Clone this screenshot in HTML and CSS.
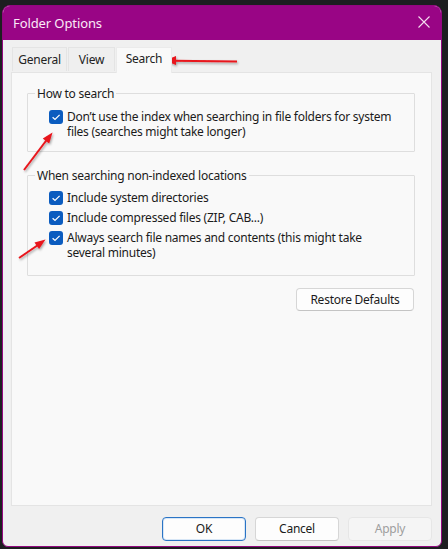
FILE: index.html
```html
<!DOCTYPE html>
<html>
<head>
<meta charset="utf-8">
<title>Folder Options</title>
<link rel="stylesheet" href="styles.css">
</head>
<body>
<div class="window">
  <div class="titlebar">
    <span class="title">Folder Options</span>
    <svg class="close" width="12" height="12" viewBox="0 0 12 12"><path d="M0.5 0.5 L11.5 11.5 M11.5 0.5 L0.5 11.5" stroke="#f4dcef" stroke-width="1.1" fill="none"/></svg>
  </div>
  <div class="body">
    <div class="tabs">
      <div class="tab">General</div>
      <div class="tab">View</div>
      <div class="tab active">Search</div>
    </div>
    <div class="panel">
      <fieldset class="group">
        <legend>How to search</legend>
        <div class="group-inner g1">
          <label class="check"><span class="box"><svg viewBox="0 0 14 14"><path d="M3.6 7.2 L6 9.5 L10.6 4.8" stroke="#fff" stroke-width="1.2" fill="none"/></svg></span><span class="ctext">Don’t use the index when searching in file folders for system files (searches might take longer)</span></label>
        </div>
      </fieldset>
      <fieldset class="group second">
        <legend>When searching non-indexed locations</legend>
        <div class="group-inner g2">
          <label class="check"><span class="box"><svg viewBox="0 0 14 14"><path d="M3.6 7.2 L6 9.5 L10.6 4.8" stroke="#fff" stroke-width="1.2" fill="none"/></svg></span><span class="ctext">Include system directories</span></label>
          <label class="check"><span class="box"><svg viewBox="0 0 14 14"><path d="M3.6 7.2 L6 9.5 L10.6 4.8" stroke="#fff" stroke-width="1.2" fill="none"/></svg></span><span class="ctext">Include compressed files (ZIP, CAB...)</span></label>
          <label class="check"><span class="box"><svg viewBox="0 0 14 14"><path d="M3.6 7.2 L6 9.5 L10.6 4.8" stroke="#fff" stroke-width="1.2" fill="none"/></svg></span><span class="ctext">Always search file names and contents (this might take several minutes)</span></label>
        </div>
      </fieldset>
      <div class="restore-row">
        <button class="btn restore">Restore Defaults</button>
      </div>
    </div>
    <div class="footer">
      <button class="btn default">OK</button>
      <button class="btn">Cancel</button>
      <button class="btn disabled">Apply</button>
    </div>
  </div>
</div>
<svg class="annotations" width="448" height="549" viewBox="0 0 448 549">
  <defs>
    <filter id="sh" x="-20%" y="-20%" width="140%" height="140%">
      <feDropShadow dx="1" dy="1.5" stdDeviation="1" flood-color="#000" flood-opacity="0.35"/>
    </filter>
  </defs>
  <g filter="url(#sh)" fill="#e8141b" stroke="#e8141b">
    <line x1="237" y1="61.5" x2="173" y2="60.8" stroke-width="2"/>
    <polygon points="165,60.5 176,56 176,65" stroke="none"/>
    <line x1="24" y1="170" x2="47" y2="139.5" stroke-width="2"/>
    <polygon points="52.5,132.5 49.2,143.4 42.8,138.6" stroke="none"/>
    <line x1="19" y1="258" x2="38" y2="245" stroke-width="2"/>
    <polygon points="45.5,239.5 39.1,249 34.5,242.4" stroke="none"/>
  </g>
</svg>
</body>
</html>
```
FILE: styles.css
```css
* { box-sizing: border-box; }
html, body { margin: 0; padding: 0; }
body {
  background: #1d1e20;
  width: 448px;
  height: 549px;
  overflow: hidden;
  position: relative;
  font-family: "Noto Sans", "Open Sans", sans-serif;
  font-size: 12px;
  letter-spacing: -0.25px;
  color: #1b1b1b;
}
.window {
  margin: 5px 0 0 2px;
  width: 440px;
  height: 542px;
  border: 1px solid #93077f;
  border-radius: 8px 8px 6px 6px;
  background: #f0f0f0;
  overflow: hidden;
  display: flex;
  flex-direction: column;
}
.titlebar {
  height: 34px;
  background: #990585;
  display: flex;
  align-items: center;
  justify-content: space-between;
  padding: 0 11px 0 10px;
  flex: none;
}
.title {
  color: #fbeaf8;
  font-size: 13px;
  letter-spacing: -0.1px;
}
.close { display: block; margin-top: -2px; }
.body {
  flex: 1;
  display: flex;
  flex-direction: column;
  padding: 7px 9px 0 8px;
}
.tabs {
  display: flex;
  align-items: flex-end;
  height: 25px;
  padding-left: 1px;
  position: relative;
  z-index: 1;
}
.tab {
  height: 24px;
  padding: 3px 0 0;
  text-align: center;
  border: 1px solid #e4e4e4;
  border-bottom: none;
  background: #efefef;
  color: #222;
  margin-right: 1px;
  margin-bottom: 1px;
}
.tab:nth-child(1) { width: 55px; }
.tab:nth-child(2) { width: 47px; }
.tab.active {
  width: 56px;
  height: 26px;
  background: #f9f9f9;
  margin-bottom: -1px;
  padding-top: 2px;
  border-color: #ebebeb;
}
.panel {
  width: 421px;
  height: 434px;
  background: #f9f9f9;
  border: 1px solid #e4e4e4;
  padding: 13px 16px 0 15px;
  display: flex;
  flex-direction: column;
}
.group {
  margin: 0;
  padding: 0;
  border: 1px solid #dedede;
  border-radius: 1px;
  min-width: 0;
}
.group.second { margin-top: 16px; }
.group legend {
  margin-left: 7px;
  padding: 0 2px;
  line-height: 15px;
}
.group-inner {
  padding-left: 21px;
  padding-right: 14px;
  display: flex;
  flex-direction: column;
}
.g1 { padding-top: 8px; padding-bottom: 12px; }
.g2 { padding-top: 7px; padding-bottom: 15px; gap: 5px; }
.check {
  display: flex;
  align-items: flex-start;
  line-height: 15px;
}
.box {
  flex: none;
  width: 14px;
  height: 14px;
  margin-top: 1px;
  margin-right: 4px;
  background: #0b5cbf;
  border-radius: 3px;
  display: block;
}
.box svg { display: block; width: 14px; height: 14px; }
.ctext { display: block; }
.restore-row {
  display: flex;
  justify-content: flex-end;
  margin-top: 12px;
  padding-right: 1px;
}
.btn {
  font-family: inherit;
  font-size: 12px;
  letter-spacing: -0.25px;
  color: #1b1b1b;
  background: #fdfdfd;
  border: 1px solid #d6d6d6;
  border-bottom-color: #c4c4c4;
  border-radius: 4px;
  height: 24px;
  width: 84px;
  padding: 0;
  line-height: 20px;
}
.restore { width: 118px; height: 23px; }
.footer {
  display: flex;
  justify-content: flex-end;
  gap: 9px;
  margin-top: 11px;
  padding-right: 0;
}
.btn.default {
  border: 1px solid #2a74c5;
  box-shadow: inset 0 0 0 1px #d7e6f6;
}
.btn.disabled {
  background: #f5f5f5;
  border-color: #e6e6e6;
  color: #9e9e9e;
}
.annotations {
  position: absolute;
  left: 0;
  top: 0;
  pointer-events: none;
}
```
